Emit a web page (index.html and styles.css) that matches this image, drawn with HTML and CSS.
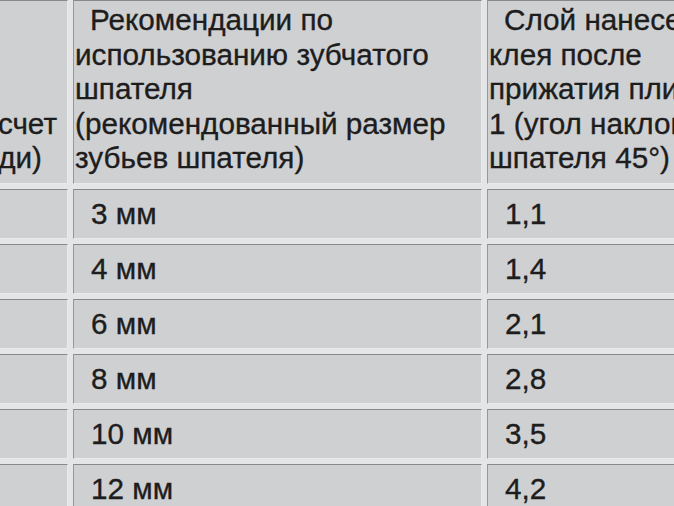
FILE: index.html
```html
<!DOCTYPE html>
<html lang="ru">
<head>
<meta charset="utf-8">
<title>Таблица</title>
<link rel="stylesheet" href="styles.css">
</head>
<body>
<table class="grid">
  <colgroup>
    <col class="c1">
    <col class="c2">
    <col class="c3">
  </colgroup>
  <thead>
    <tr>
      <th class="hd first">
        <span class="ln ln4">в пересчет</span>
        <span class="ln ln5">площади)</span>
      </th>
      <th class="hd">
        <span class="ind">Рекомендации по</span><br>использованию зубчатого<br>шпателя<br>(рекомендованный размер<br>зубьев шпателя)
      </th>
      <th class="hd">
        <span class="ind">Слой нанесенного</span><br>клея после<br>прижатия плитки,<br>1 (угол наклона<br>шпателя 45°)
      </th>
    </tr>
  </thead>
  <tbody>
    <tr><td></td><td class="val">3 мм</td><td class="val">1,1</td></tr>
    <tr><td></td><td class="val">4 мм</td><td class="val">1,4</td></tr>
    <tr><td></td><td class="val">6 мм</td><td class="val">2,1</td></tr>
    <tr><td></td><td class="val">8 мм</td><td class="val">2,8</td></tr>
    <tr><td></td><td class="val">10 мм</td><td class="val">3,5</td></tr>
    <tr><td></td><td class="val">12 мм</td><td class="val">4,2</td></tr>
  </tbody>
</table>
</body>
</html>
```

FILE: styles.css
```css
html, body {
  margin: 0;
  padding: 0;
  background: #e4e5e7;
  overflow: hidden;
  width: 674px;
  height: 506px;
}

.grid {
  margin-left: -100px;
  margin-top: -5px;
  table-layout: fixed;
  width: 920px;
  border-collapse: separate;
  border-spacing: 5px;
  background: #e4e5e7;
  font-family: "Liberation Sans", Arial, sans-serif;
  font-size: 29.7px;
  line-height: 34.5px;
  color: #1d1d1d;
  -webkit-text-stroke: 0.35px #1d1d1d;
}

.c1 { width: 163px; }
.c2 { width: 409px; }
.c3 { width: 334px; }

.grid th,
.grid td {
  background: #cfd0d2;
  border-top: 1px solid #88898b;
  border-left: 1px solid #96979a;
  border-right: 1px solid #e9eaec;
  border-bottom: 1px solid #e9eaec;
  text-align: left;
  font-weight: normal;
  padding: 0 0 0 1px;
  white-space: nowrap;
  overflow: hidden;
}

.hd {
  vertical-align: top;
  padding-top: 2px !important;
  padding-bottom: 7px !important;
}

.hd.first {
  vertical-align: bottom;
}

.ln {
  display: block;
  text-align: right;
}

.ln4 { padding-right: 10px; }
.ln5 { padding-right: 25px; }

.ind {
  padding-left: 15px;
}

.grid td {
  height: 50px;
  vertical-align: middle;
  padding-top: 2px;
  box-sizing: border-box;
}

.val {
  padding-left: 17px !important;
}
```
